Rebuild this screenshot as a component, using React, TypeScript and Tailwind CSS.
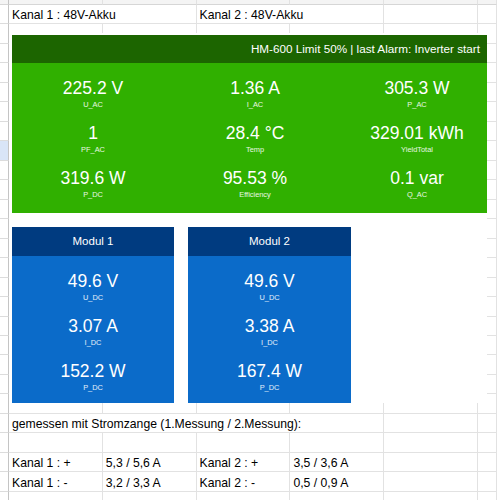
import React from 'react';

type Cell = { span?: number; text?: string };

const EMPTY: Cell[] = [{}, {}, {}, {}, {}, {}];

// spreadsheet rows, index = row below the top band
const sheetRows: Record<number, Cell[]> = {
  0: [{ span: 2, text: 'Kanal 1 : 48V-Akku' }, { span: 2, text: 'Kanal 2 : 48V-Akku' }, {}, {}],
  21: [{ span: 4, text: 'gemessen mit Stromzange (1.Messung / 2.Messung):' }, {}, {}],
  23: [{ text: 'Kanal 1 : +' }, { text: '5,3 / 5,6 A' }, { text: 'Kanal 2 : +' }, { text: '3,5 / 3,6 A' }, {}, {}],
  24: [{ text: 'Kanal 1 : -' }, { text: '3,2 / 3,3 A' }, { text: 'Kanal 2 : -' }, { text: '0,5 / 0,9 A' }, {}, {}],
};

const spanClass: Record<number, string> = {
  1: '',
  2: 'col-span-2',
  4: 'col-span-4',
};

const inverter = [
  ['225.2 V', 'U_AC'],
  ['1.36 A', 'I_AC'],
  ['305.3 W', 'P_AC'],
  ['1', 'PF_AC'],
  ['28.4 °C', 'Temp'],
  ['329.01 kWh', 'YieldTotal'],
  ['319.6 W', 'P_DC'],
  ['95.53 %', 'Efficiency'],
  ['0.1 var', 'Q_AC'],
];

const modules = [
  {
    name: 'Modul 1',
    width: 'w-[162px]',
    values: [
      ['49.6 V', 'U_DC'],
      ['3.07 A', 'I_DC'],
      ['152.2 W', 'P_DC'],
    ],
  },
  {
    name: 'Modul 2',
    width: 'w-[163px]',
    values: [
      ['49.6 V', 'U_DC'],
      ['3.38 A', 'I_DC'],
      ['167.4 W', 'P_DC'],
    ],
  },
];

function Metric({ value, label }: { value: string; label: string }) {
  return (
    <div className="flex h-[45px] flex-col items-center pt-[3px] text-white">
      <div className="text-[17.5px] leading-[20px] whitespace-nowrap">{value}</div>
      <div className="mt-[2px] text-[7.4px] leading-[10px] text-white/90 whitespace-nowrap">{label}</div>
    </div>
  );
}

function SheetRow({ index }: { index: number }) {
  const cells = sheetRows[index] ?? EMPTY;
  const selected = index === 7;
  return (
    <div className="grid h-[19.48px] grid-cols-[9px_repeat(5,93.8px)_1fr]">
      <div className={`border-r border-b border-r-[#c4c4c4] border-b-[#dcdcdc] ${selected ? 'bg-[#d9e5f7]' : 'bg-white'}`} />
      {cells.map((c, i) => (
        <div
          key={i}
          className={`${spanClass[c.span ?? 1]} flex items-end overflow-hidden border-r border-b border-[#e2e2e2] pb-[1px] pl-[3px] text-[12.2px] leading-[14px] whitespace-nowrap text-black`}
        >
          {c.text}
        </div>
      ))}
    </div>
  );
}

export default function App() {
  const rows = Array.from({ length: 26 }, (_, i) => i);

  return (
    <div className="relative h-[500px] w-[497px] overflow-hidden bg-white font-['Liberation_Sans',Arial,sans-serif]">
      {/* top band */}
      <div className="grid h-[5px] grid-cols-[9px_repeat(5,93.8px)_1fr] bg-[#f4f4f4]">
        <div className="border-r border-b border-r-[#c4c4c4] border-b-[#d6d6d6]" />
        {EMPTY.map((_, i) => (
          <div key={i} className="border-r border-b border-r-[#e2e2e2] border-b-[#d6d6d6]" />
        ))}
      </div>
      {rows.map((r) => (
        <SheetRow key={r} index={r} />
      ))}

      {/* embedded dashboard images over the cells */}
      <div className="absolute top-[33px] left-[9px] h-[370px] w-[478px] bg-white pt-[2px] pl-[3px]">
        <div className="h-[178px] w-[475px] overflow-hidden bg-[#30b000]">
          <div className="flex h-[28px] items-center justify-end bg-[#1c6500] pr-[7px] text-[11.7px] whitespace-nowrap text-white">
            HM-600 Limit 50% | last Alarm: Inverter start
          </div>
          <div className="grid grid-cols-[162px_162px_162px] pt-[12px]">
            {inverter.map(([v, l]) => (
              <Metric key={l} value={v} label={l} />
            ))}
          </div>
        </div>

        <div className="mt-[14px] flex gap-[14px]">
          {modules.map((m) => (
            <div key={m.name} className={`${m.width} h-[176px] bg-[#0b6bc9]`}>
              <div className="flex h-[29px] items-center justify-center bg-[#003b80] text-[11.5px] text-white">
                {m.name}
              </div>
              <div className="flex flex-col pt-[12px]">
                {m.values.map(([v, l]) => (
                  <Metric key={l} value={v} label={l} />
                ))}
              </div>
            </div>
          ))}
        </div>
      </div>
    </div>
  );
}
